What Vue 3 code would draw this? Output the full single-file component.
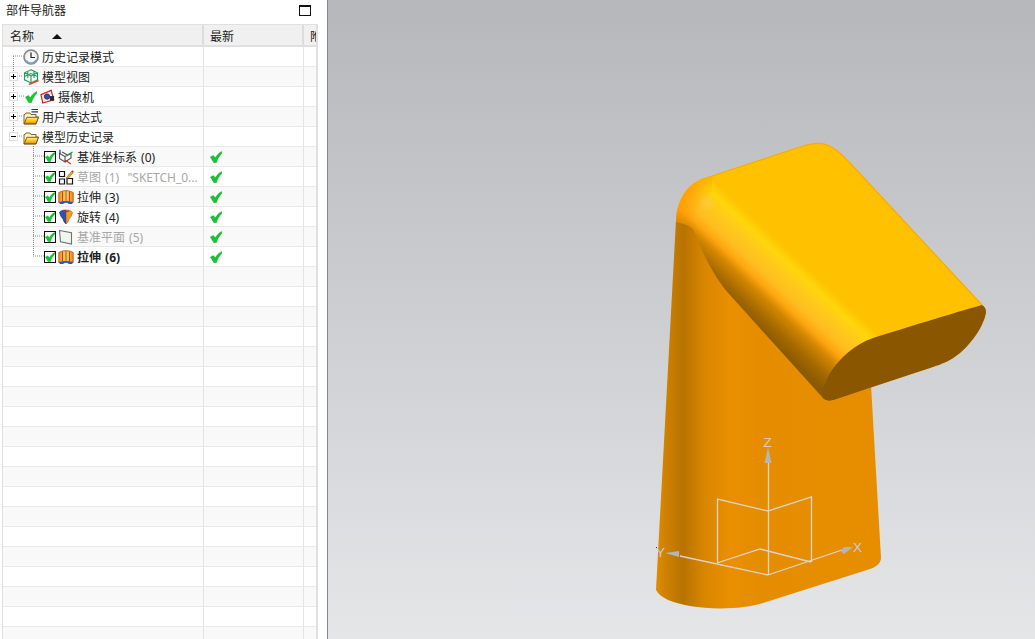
<template>
  <div class="app">
    <aside class="panel">
      <div class="panel-title">
        <span>部件导航器</span>
        <i class="maximize"></i>
      </div>
      <div class="table">
        <div class="head">
          <div class="col-name">名称<i class="sort"></i></div>
          <div class="col-new">最新</div>
          <div class="col-note">附注</div>
        </div>
        <div class="body">
          <svg class="tree-lines" width="60" height="220">
            <path d="M13.5 10V90M13 10H22M13 30H22M13 50H24M13 70H22M13 90H22M33.5 100V210M33 110H44M33 130H44M33 150H44M33 170H44M33 190H44M33 210H44" fill="none" stroke="#8c8c8c" stroke-dasharray="1 1" />
          </svg>
          <div v-for="(row, i) in rows" :key="i" class="row" :class="{ alt: i % 2 === 1 }">
            <div class="col-name cell" :class="{ child: row.child, dim: row.dim, bold: row.bold }">
              <template v-if="row.label">
                <span v-if="!row.child" class="expander" :class="{ blank: !row.exp, open: row.exp === 'open' }"></span>
                <svg v-if="row.check" class="tick tick-tree" viewBox="0 0 12 12"><path :d="tickPath" /></svg>
                <span v-if="row.child" class="checkbox">
                  <svg class="tick" viewBox="0 0 12 12"><path :d="tickPath" /></svg>
                </span>
                <svg class="icon" viewBox="0 0 16 16">
                  <template v-if="row.icon === 'clock'">
                    <circle cx="8" cy="8" r="7" fill="#dfe6ee" stroke="#858688" stroke-width="1.600" />
                    <circle cx="8" cy="8" r="5" fill="#f7f7f5" />
                    <path d="M8 3.500V8.500H12" fill="none" stroke="#222" stroke-width="1.200" />
                    <path d="M3 11.500a6 6 0 0 0 10 0" fill="none" stroke="#7f9ecb" stroke-width="1.500" />
                  </template>
                  <template v-else-if="row.icon === 'view'">
                    <path d="M8 .8 14.500 3.800V10.800L8 14 1.500 10.800V3.800ZM1.500 3.800 8 7 14.500 3.800M8 7V14M4.800 2.300V9M11 2.300V9M1.500 7.500 8 4.500 14.500 7.500" fill="none" stroke="#16a15c" stroke-width="1.100" />
                    <path d="M6 15.500 15.500 11.500" stroke="#e2462b" stroke-width="1.500" />
                  </template>
                  <template v-else-if="row.icon === 'camera'">
                    <path d="M1 5.500 12 1 14.500 11 3 14.500Z" fill="#fbeee8" stroke="#d8261c" stroke-width="1.300" />
                    <circle cx="7.500" cy="7.500" r="2.800" fill="#3b4fa8" stroke="#1e2a70" />
                    <path d="M10.500 7H15V12H10.500Z" fill="#2b2b2b" />
                  </template>
                  <template v-else-if="row.icon === 'folder' || row.icon === 'expr'">
                    <path d="M1 15V5.500H2L3 4H7L8 5.500H13V8H15.500L13 15Z" fill="#fff3b8" stroke="#6d5310" stroke-width=".9" />
                    <path d="M1.200 14.800 3.800 8.300H15.400L13 14.800Z" fill="url(#folderFill)" stroke="#6d5310" stroke-width=".9" />
                    <path v-if="row.icon === 'expr'" d="M8.500 .5H15M8.500 2.800H15" stroke="#232f9b" stroke-width="1.200" />
                  </template>
                  <template v-else-if="row.icon === 'csys'">
                    <path d="M1.500 4.500 7 7.500V13L1.500 9.500ZM7 7.500 13 4.500V9L7 13M4 3 9.500 6" fill="none" stroke="#555" stroke-width="1.100" />
                    <path d="M2 5V0.800" stroke="#1f2fb0" stroke-width="1.200" />
                    <path d="M9 6.500 14.500 3" stroke="#18a43c" stroke-width="1.200" />
                    <path d="M7 11 13 15" stroke="#d92c20" stroke-width="1.200" />
                  </template>
                  <template v-else-if="row.icon === 'sketch'">
                    <path d="M1.500 2.500H6.500V7.500H1.500ZM1.500 10H6.500V15H1.500ZM9 9.500H14.500V15H9Z" fill="#fff" stroke="#111" stroke-width="1.200" />
                    <path d="M8.500 8.500 13.500 2.500 15 3.800 10 9.500Z" fill="#f2b321" stroke="#7a5a10" stroke-width=".6" />
                    <path d="M13.500 2.500 14.500 1.200 15.800 2.400 15 3.800Z" fill="#d8261c" />
                  </template>
                  <template v-else-if="row.icon === 'extrude'">
                    <path d="M.8 3.500Q8 -.3 15.200 3.500V13.500Q8 10.700 .8 13.500Z" fill="url(#extrudeFill)" stroke="#b5540d" stroke-width=".8" />
                    <path d="M4.500 2.500V12M8 2V11.500M11.500 2.500V12" stroke="#b84a0c" stroke-width="1" />
                    <path d="M.8 13.500Q8 10.700 15.200 13.500L14 15H11Q8 12.500 5 15H2Z" fill="#2e55c4" />
                  </template>
                  <template v-else-if="row.icon === 'revolve'">
                    <path d="M8 1Q2.500 1 1.500 3.500 2.500 8 5 10 5.500 13 8 15Z" fill="#2a4fc0" stroke="#15296e" stroke-width=".6" />
                    <path d="M8 1Q13.500 1 14.500 3.500 13.500 8 11 10 10.500 13 8 15Z" fill="#f39a1f" stroke="#a6520e" stroke-width=".6" />
                    <path d="M5 1.800Q8 3.500 11 1.800" fill="none" stroke="#d8261c" stroke-width="1.300" />
                  </template>
                  <template v-else-if="row.icon === 'plane'">
                    <path d="M1.500 1.500 13.500 3.800V15L2.500 12.800Z" fill="#eff5ef" stroke="#6a756e" stroke-width="1.100" />
                  </template>
                </svg>
                <span class="label">{{ row.label }}</span>
              </template>
            </div>
            <div class="col-new cell">
              <svg v-if="row.child" class="tick tick-new" viewBox="0 0 12 12"><path :d="tickPath" /></svg>
            </div>
            <div class="col-note cell"></div>
          </div>
        </div>
      </div>
      <svg class="defs" width="0" height="0">
        <defs>
          <linearGradient id="folderFill" x1="0" y1="0" x2="0" y2="1">
            <stop offset="0" stop-color="#fff19a" />
            <stop offset=".5" stop-color="#ffc81e" />
            <stop offset="1" stop-color="#e98e00" />
          </linearGradient>
          <linearGradient id="extrudeFill" x1="0" y1="0" x2="1" y2="0">
            <stop offset="0" stop-color="#f2891a" />
            <stop offset=".5" stop-color="#ffd56a" />
            <stop offset="1" stop-color="#f08414" />
          </linearGradient>
        </defs>
      </svg>
    </aside>

    <main class="viewport">
      <svg class="scene" viewBox="328 0 707 639" width="707" height="639">
        <defs>
          <linearGradient id="base" gradientUnits="userSpaceOnUse" x1="656" y1="0" x2="881" y2="0">
            <stop offset="0" stop-color="#e08c00" />
            <stop offset=".05" stop-color="#cc8000" />
            <stop offset=".12" stop-color="#b87300" />
            <stop offset=".22" stop-color="#da8700" />
            <stop offset=".33" stop-color="#ea8f00" />
            <stop offset=".45" stop-color="#e58d00" />
            <stop offset="1" stop-color="#e78e00" />
          </linearGradient>
          <linearGradient id="top" gradientUnits="userSpaceOnUse" x1="770" y1="340" x2="891" y2="210">
            <stop offset="0" stop-color="#8c5a00" />
            <stop offset=".07" stop-color="#a56a00" />
            <stop offset=".15" stop-color="#d28600" />
            <stop offset=".2" stop-color="#ffa60f" />
            <stop offset=".25" stop-color="#ffbd20" />
            <stop offset=".33" stop-color="#ffca1a" />
            <stop offset=".385" stop-color="#ffd60a" />
            <stop offset=".44" stop-color="#ffc200" />
            <stop offset="1" stop-color="#ffc000" />
          </linearGradient>
          <linearGradient id="corner" gradientUnits="userSpaceOnUse" x1="682" y1="190" x2="704" y2="206">
            <stop offset="0" stop-color="#ff9a00" />
            <stop offset="1" stop-color="#ff9a00" stop-opacity="0" />
          </linearGradient>
          <radialGradient id="spot" gradientUnits="userSpaceOnUse" cx="707" cy="203" r="9">
            <stop offset="0" stop-color="#ffc83c" />
            <stop offset="1" stop-color="#ffc83c" stop-opacity="0" />
          </radialGradient>
        </defs>

        <path d="M676 220 656 590C660 598 673 603 690 606 713 610 745 609 763 603L870 569C876 567 881 563 881 558L871 385 700 230Z" fill="url(#base)" />
        <path d="M676 222C676 205 684 186 700 180L803 146C815 142 825 142 833 148 840 152 845 158 850 163L982 305 986 312C985 322 975 340 960 353 950 361 942 364 933 367L833 400C828 401 825 400 823 398L730 295C716 280 703 255 695 233 693 228 690 225 676 222Z" fill="url(#top)" />
        <path d="M676 222C676 205 684 186 700 180L712 176 712 235 695 233C693 228 690 225 676 222Z" fill="url(#corner)" />
        <circle cx="707" cy="203" r="9" fill="url(#spot)" />
        <path d="M700 180 803 146C815 142 825 142 833 148 840 152 845 158 850 163L982 305" fill="none" stroke="#f8ab00" stroke-width="1.200" />
        <path d="M982 305C950 314 905 328 873 338 856 344 840 357 830 373 826 381 823 388 822 392L823 398C825 400 828 401 833 400L933 367C942 364 950 361 960 353 975 340 985 322 986 312 986 308 984 306 982 305Z" fill="#8b5600" />

        <g fill="none" stroke="#d9d5ce" stroke-width="1.300">
          <path d="M768.500 463V575" />
          <path d="M768 575 680 556M768 575 842 550" />
          <path d="M717.500 563V499L768 511 811.500 497V562M717 563 760 549 811 562" />
        </g>
        <path d="M768 447 771.500 463H764.500Z" fill="#b5b5b5" />
        <path d="M665 553 679 551 679 557Z" fill="#b5b5b5" />
        <path d="M853 547 844 547 841 551 844 554Z" fill="#b5b5b5" />
        <g class="axis-label">
          <text x="763.500" y="446.500">Z</text>
          <text x="656" y="556.500">Y</text>
          <text x="853" y="552">X</text>
        </g>
        <rect x="656" y="547" width="1" height="1" fill="#2430d0" />
      </svg>
    </main>
  </div>
</template>

<script setup>
const tickPath = 'M.3 6 3.5 4.400 5.200 6.800C6.800 4.200 8.800 2 11.600.4L12 2.200C9.600 4.600 7.600 8 6.400 11.800H3.800Z'

const items = [
  { label: '历史记录模式', icon: 'clock' },
  { label: '模型视图', icon: 'view', exp: 'closed' },
  { label: '摄像机', icon: 'camera', exp: 'closed', check: true },
  { label: '用户表达式', icon: 'expr', exp: 'closed' },
  { label: '模型历史记录', icon: 'folder', exp: 'open' },
  { label: '基准坐标系 (0)', icon: 'csys', child: true },
  { label: '草图 (1) \u00a0"SKETCH_0...', icon: 'sketch', child: true, dim: true },
  { label: '拉伸 (3)', icon: 'extrude', child: true },
  { label: '旋转 (4)', icon: 'revolve', child: true },
  { label: '基准平面 (5)', icon: 'plane', child: true, dim: true },
  { label: '拉伸 (6)', icon: 'extrude', child: true, bold: true }
]

// the navigator keeps drawing empty striped rows to the bottom of the window
const rows = [...items, ...Array.from({ length: 19 }, () => ({}))]
</script>

<style>
html, body {
  margin: 0;
  overflow: hidden;
}
</style>

<style scoped>
.app {
  display: flex;
  width: 1035px;
  height: 639px;
  overflow: hidden;
  background: #fff;
  font-family: Tahoma, "Noto Sans", "Noto Sans CJK SC", sans-serif;
  font-size: 12px;
  color: #222;
}
.panel {
  width: 327px;
  flex: none;
  padding-left: 2px;
  box-sizing: border-box;
}
.panel-title {
  display: flex;
  align-items: center;
  justify-content: space-between;
  height: 24px;
  box-sizing: border-box;
  padding: 0 6px 4px 4px;
  width: 315px;
}
.maximize {
  width: 12px;
  height: 11px;
  box-sizing: border-box;
  border: 1px solid #111;
  border-top-width: 2px;
}
.table {
  width: 316px;
  height: 615px;
  box-sizing: border-box;
  border: 1px solid #e0e0e0;
  border-bottom: 0;
  border-right-width: 2px;
  overflow: hidden;
}
.head {
  display: flex;
  height: 22px;
  box-sizing: border-box;
  background: #f0f0f0;
  border-bottom: 2px solid #e0e0e0;
  line-height: 24px;
}
.col-name {
  width: 201px;
  flex: none;
  box-sizing: border-box;
  border-right: 1px solid #e4e4e4;
}
.col-new {
  width: 100px;
  flex: none;
  box-sizing: border-box;
  border-right: 1px solid #e4e4e4;
}
.col-note {
  flex: 1;
  min-width: 0;
  overflow: hidden;
  white-space: nowrap;
}
.head .col-name {
  padding-left: 7px;
  position: relative;
  border-right-width: 2px;
  border-right-color: #dcdcdc;
}
.head .col-new {
  padding-left: 6px;
  border-right-width: 2px;
  border-right-color: #dcdcdc;
}
.head .col-note {
  padding-left: 6px;
}
.sort {
  position: absolute;
  left: 49px;
  top: 9px;
  border-left: 5px solid transparent;
  border-right: 5px solid transparent;
  border-bottom: 5px solid #111;
}
.body {
  position: relative;
}
.tree-lines {
  position: absolute;
  left: -3px;
  top: -1px;
  pointer-events: none;
}
.row {
  display: flex;
  height: 20px;
  box-sizing: border-box;
  border-bottom: 1px solid #e9e9e9;
  background: #fff;
}
.row.alt {
  background: #f9f9f9;
}
.cell {
  display: flex;
  align-items: center;
  white-space: nowrap;
}
.col-name.cell {
  padding-left: 6px;
  position: relative;
  word-spacing: 1px;
}
.col-name.child {
  padding-left: 41px;
}
.dim {
  color: #a8a8a8;
}
.bold {
  font-weight: 700;
}
.expander {
  width: 9px;
  height: 9px;
  flex: none;
  box-sizing: border-box;
  border: 1px solid #dedede;
  background: #fff;
  margin-right: 4px;
  position: relative;
  z-index: 1;
}
.expander.blank {
  visibility: hidden;
}
.expander::before {
  content: "";
  position: absolute;
  left: 1px;
  top: 3px;
  width: 5px;
  height: 1px;
  background: #000;
}
.expander::after {
  content: "";
  position: absolute;
  left: 3px;
  top: 1px;
  width: 1px;
  height: 5px;
  background: #000;
}
.expander.open::after {
  display: none;
}
.tick {
  display: block;
  fill: #14c62f;
  stroke: #0b8f20;
  stroke-width: .3;
}
.tick-tree {
  width: 12px;
  height: 12px;
  margin: 0 2px 0 3px;
  flex: none;
  position: relative;
}
.tick-tree + .icon {
  width: 15px;
}
.tick-new {
  width: 12px;
  height: 12px;
  margin-left: 6px;
}
.checkbox {
  width: 12px;
  height: 12px;
  flex: none;
  box-sizing: border-box;
  border: 1px solid #111;
  background: #fff;
  position: relative;
}
.checkbox .tick {
  width: 10px;
  height: 10px;
}
.icon {
  width: 16px;
  height: 16px;
  flex: none;
  margin-left: 1px;
  position: relative;
}
.child .icon {
  margin-left: 2px;
}
.label {
  margin-left: 3px;
}
.defs {
  position: absolute;
}
.viewport {
  flex: 1;
  min-width: 0;
  border-left: 1px solid #85898c;
  background: linear-gradient(#b5b7ba, #e5e6e8);
}
.scene {
  display: block;
}
.axis-label {
  font-family: "Liberation Sans", sans-serif;
  font-size: 13.500px;
  fill: #cfcdca;
}
</style>
